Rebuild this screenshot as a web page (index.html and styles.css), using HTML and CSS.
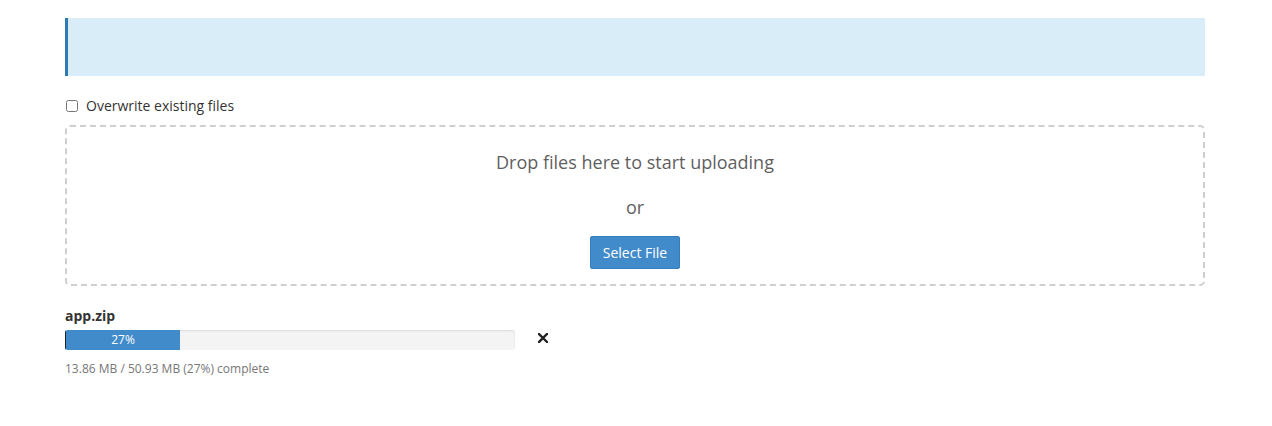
FILE: index.html
```html
<!DOCTYPE html>
<html>
<head>
<meta charset="utf-8">
<link rel="stylesheet" href="styles.css">
</head>
<body>
<div class="page">
  <div class="alert"></div>
  <label class="check">
    <input type="checkbox" class="check-box">
    <span>Overwrite existing files</span>
  </label>
  <div class="dropzone">
    <div class="drop-title">Drop files here to start uploading</div>
    <div class="drop-or">or</div>
    <button class="btn">Select File</button>
  </div>
  <div class="file">
    <div class="file-name">app.zip</div>
    <div class="file-row">
      <div class="progress">
        <div class="progress-bar" style="width: 115px">27%</div>
      </div>
      <svg class="remove" width="10" height="10" viewBox="0 0 10 10">
        <path d="M1 1 L9 9 M9 1 L1 9" stroke="#222" stroke-width="2.4" stroke-linecap="square"/>
      </svg>
    </div>
    <div class="file-stats">13.86 MB / 50.93 MB (27%) complete</div>
  </div>
</div>
</body>
</html>
```

FILE: styles.css
```css
html, body {
  margin: 0;
  padding: 0;
  background: #fff;
}
body {
  font-family: "Open Sans", "DejaVu Sans", sans-serif;
  font-size: 14px;
  color: #333;
}
.page {
  width: 1140px;
  margin-left: 65px;
  padding-top: 18px;
}
.alert {
  height: 58px;
  background: #d9edf8;
  border-left: 3px solid #2f7ab5;
  box-sizing: border-box;
}
.check {
  display: flex;
  align-items: center;
  margin-top: 20px;
  height: 20px;
  line-height: 20px;
}
.check-box {
  margin: 0 8px 0 1px;
  width: 12px;
  height: 12px;
}
.dropzone {
  margin-top: 9px;
  height: 161px;
  box-sizing: border-box;
  border: 2px dashed #cfcfcf;
  border-radius: 5px;
  display: flex;
  flex-direction: column;
  align-items: center;
  padding-top: 22px;
}
.drop-title {
  font-size: 18px;
  line-height: 26px;
  color: #5f5f5f;
}
.drop-or {
  font-size: 18px;
  line-height: 26px;
  color: #5f5f5f;
  margin-top: 19px;
}
.btn {
  margin-top: 16px;
  width: 90px;
  height: 33px;
  background: #428bca;
  border: 1px solid #357ebd;
  border-radius: 2px;
  color: #fff;
  font-family: "Open Sans", sans-serif;
  font-size: 14px;
  padding: 0;
}
.file {
  margin-top: 20px;
}
.file-name {
  font-weight: bold;
  font-size: 14px;
  line-height: 20px;
  color: #333;
}
.file-row {
  display: flex;
  align-items: center;
  margin-top: 4px;
}
.progress {
  width: 450px;
  height: 20px;
  background: #f4f4f4;
  border-radius: 3px;
  box-shadow: inset 0 1px 2px rgba(0,0,0,0.1);
  overflow: hidden;
}
.progress-bar {
  height: 100%;
  background: #428bca;
  color: #fff;
  font-size: 12px;
  line-height: 20px;
  text-align: center;
  border-left: 1px solid #222;
  box-sizing: border-box;
}
.remove {
  margin-left: 23px;
  margin-bottom: 4px;
  display: block;
}
.file-stats {
  margin-top: 10px;
  font-size: 12px;
  line-height: 18px;
  color: #777;
}
```
